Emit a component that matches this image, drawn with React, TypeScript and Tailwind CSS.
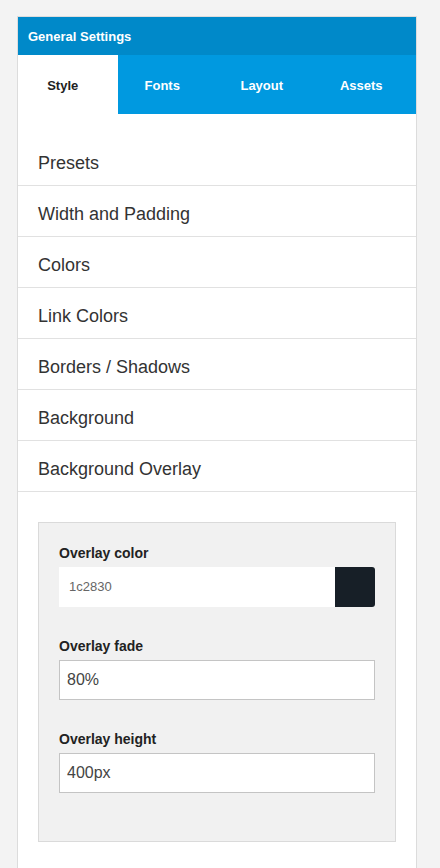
import { useState } from 'react'

const tabs = ['Style', 'Fonts', 'Layout', 'Assets']
const sections = ['Presets', 'Width and Padding', 'Colors', 'Link Colors', 'Borders / Shadows', 'Background', 'Background Overlay']

function Field(props: { label: string; children: any; last?: boolean }) {
  return (
    <div className={props.last ? '' : 'mb-[31px]'}>
      <div className="mb-[6px] h-4 text-[14px] font-bold leading-4 text-[#222]">{props.label}</div>
      {props.children}
    </div>
  )
}

export default function App() {
  const [active, setActive] = useState(0)

  return (
    <div className="min-h-[868px] bg-[#f3f3f3] pt-4 font-['Liberation_Sans',Arial,sans-serif]">
      <div className="ml-[17px] min-h-[852px] w-[400px] border border-b-0 border-[#dcdcdc] bg-white">
        <div className="flex h-[38px] items-center bg-[#0089c9] px-[10px] pt-[2px] text-[13px] font-bold text-white">
          General Settings
        </div>
        <div className="flex h-[59px]">
          {tabs.map((t, i) => (
            <button
              key={t}
              onClick={() => setActive(i)}
              className={
                'flex flex-1 items-center justify-center pr-[10px] pt-[3px] text-[13px] font-bold ' +
                (active == i ? 'bg-white text-[#222]' : 'bg-[#0099e0] text-white')
              }
            >
              {t}
            </button>
          ))}
        </div>

        <div className="pt-[21px]">
          {sections.map((s) => (
            <div key={s} className="flex h-[51px] items-center border-b border-[#e1e1e1] px-5 pt-[6px] text-[18px] text-[#333]">
              {s}
            </div>
          ))}
        </div>

        <div className="px-5 pt-[30px]">
          <div className="border border-[#dadada] bg-[#f1f1f1] px-5 pb-[48px] pt-[22px]">
            <Field label="Overlay color">
              <div className="flex h-10">
                <div className="flex flex-1 items-center bg-white pl-[10px] text-[13px] text-[#666]">1c2830</div>
                <div className="w-10 rounded-r-[3px] bg-[#171f27]"></div>
              </div>
            </Field>
            <Field label="Overlay fade">
              <div className="flex h-10 items-center border border-[#c4c4c4] bg-white pl-[7px] text-[16px] text-[#444]">80%</div>
            </Field>
            <Field label="Overlay height" last>
              <div className="flex h-10 items-center border border-[#c4c4c4] bg-white pl-[7px] text-[16px] text-[#444]">400px</div>
            </Field>
          </div>
        </div>
      </div>
    </div>
  )
}
